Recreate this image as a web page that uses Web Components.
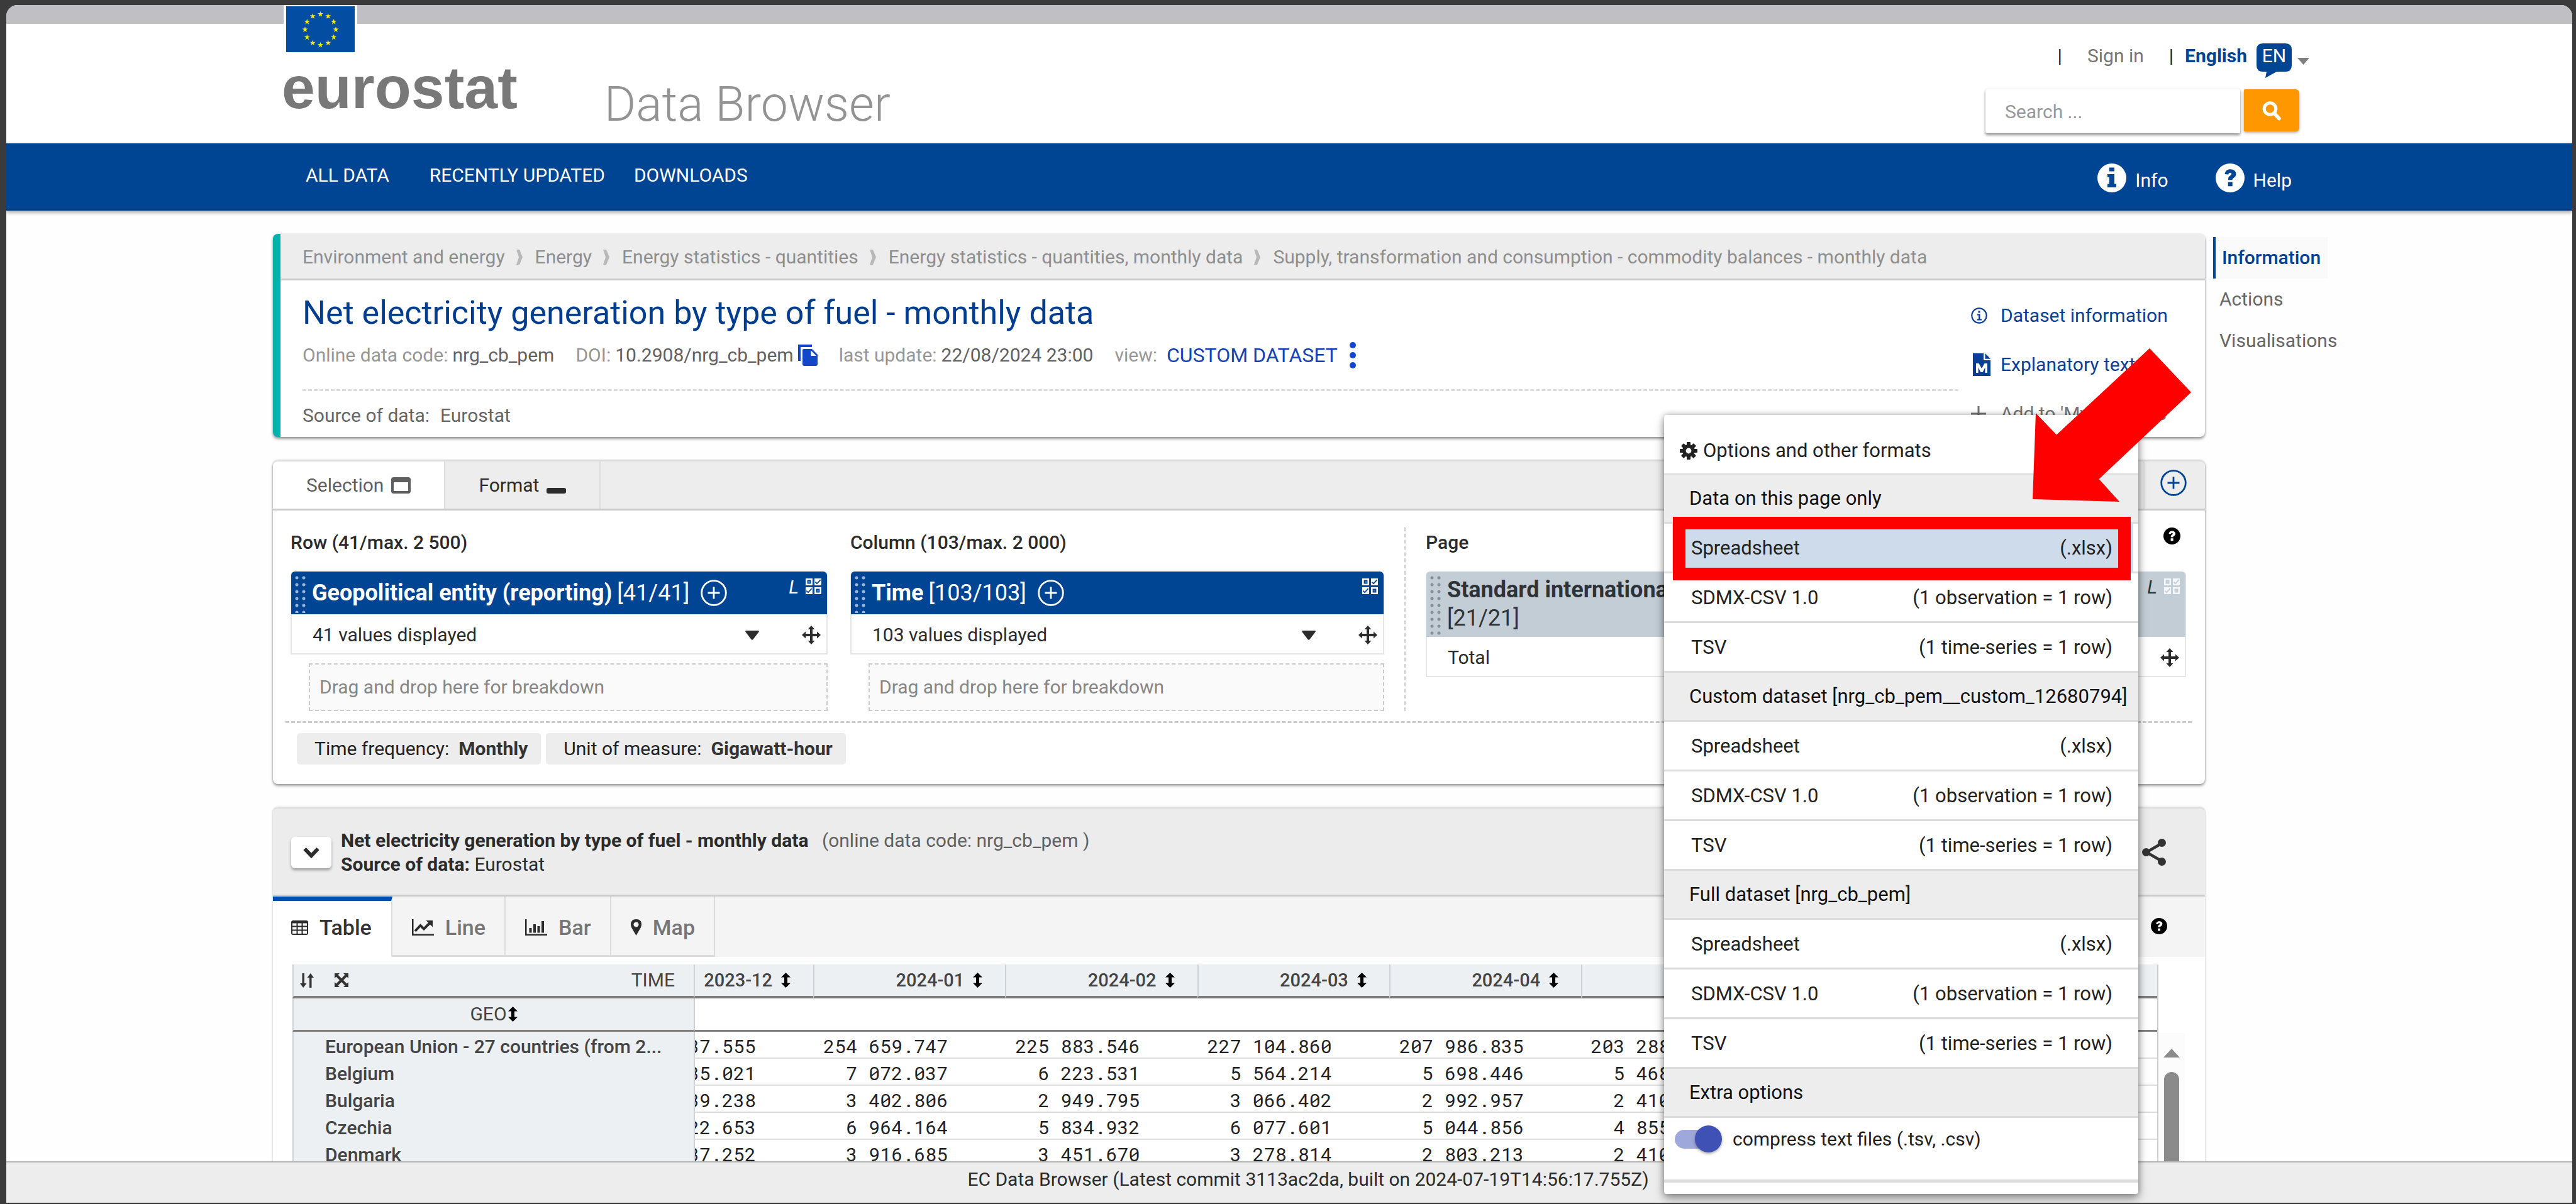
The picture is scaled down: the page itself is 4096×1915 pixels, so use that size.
<!DOCTYPE html>
<html lang="en">
<head>
<meta charset="utf-8">
<title>Data Browser - Eurostat</title>
<style>
html,body{height:100%}
body{margin:0;box-sizing:border-box;padding:8px 6px 2px 10px;background:#3b3b3b;font:400 30px/40px Roboto,"Liberation Sans",sans-serif;color:#333}
</style>
</head>
<body>
<db-app></db-app>
<script>
const BASE=`*{box-sizing:border-box}button,input,select{font:inherit;color:inherit;background:none;border:0;padding:0;margin:0;text-align:left;border-radius:0}a{color:inherit;text-decoration:none}p,h1,h2,h3,ul,ol{margin:0;padding:0;font:inherit;list-style:none}`;
function define(name,css,html){
  const t=document.createElement('template');
  customElements.define(name,class extends HTMLElement{
    constructor(){
      super();
      t.innerHTML=`<style>${BASE}${css}</style>${typeof html==='function'?html(this):html}`;
      this.attachShadow({mode:'open'}).append(t.content.cloneNode(true));
    }
  });
}

/* ---- icons ---- */
const star=(x,y)=>{let p='';for(let i=0;i<10;i++){const r=i%2?1.9:4.8,a=-Math.PI/2+i*Math.PI/5;p+=(x+r*Math.cos(a)).toFixed(2)+','+(y+r*Math.sin(a)).toFixed(2)+' '}return `<polygon points="${p}"/>`};
const ring=Array.from({length:12},(_,i)=>star(54.5+24.5*Math.sin(i*Math.PI/6),37-24.5*Math.cos(i*Math.PI/6))).join('');
const gear=()=>{let p='';for(let i=0;i<8;i++){p+=`<rect x="11" y="0" width="6" height="7" rx="1" transform="rotate(${i*45} 14 14)"/>`}return p+'<circle cx="14" cy="14" r="7.2" fill="none" stroke="currentColor" stroke-width="5.6"/>'};
const qmark=(bg,fg)=>`<circle cx="23" cy="23" r="23" fill="${bg}"/><path d="M14.5 17c.6-5.300 4.200-7.800 8.800-7.800 5.200 0 9.200 3 9.200 7.600 0 3.200-1.800 4.800-4 6.200-1.600 1-2 1.700-2 3.300h-6.600c0-3.600.6-5.200 3-6.900 1.600-1.100 2.300-1.600 2.300-2.700 0-1.200-1-1.900-2.200-1.900-1.500 0-2.300.9-2.800 2.700zM19.700 29.500h7v6.800h-7z" fill="${fg}"/>`;
const ICONS={
 flag:['0 0 109 73',`<rect width="109" height="73" fill="#034ea2"/><g fill="#f5ea14">${ring}</g>`],
 caret:['0 0 19 11','<path d="M0 0h19L9.500 11z"/>'],
 bubble:['0 0 56 55','<path d="M10 0h36q10 0 10 10v25q0 10-10 10H32L14 55l2-10h-6Q0 45 0 35V10Q0 0 10 0z"/>'],
 search:['0 0 30 30','<circle cx="12.500" cy="12" r="9.300" fill="none" stroke="currentColor" stroke-width="5"/><path d="M19 19l8 8.500" stroke="currentColor" stroke-width="5.500" stroke-linecap="round"/>'],
 info:['0 0 46 46','<circle cx="23" cy="23" r="23" fill="#fff"/><path d="M19 6.500h8v6h-8zM16 17h11v15.500h3V38H16v-5.500h3V22h-3z" fill="#004494"/>'],
 help:['0 0 46 46',qmark('#fff','#004494')],
 question:['0 0 46 46',qmark('#000','#fff')],
 sep:['0 0 12 24','<path d="M1 0h5l5 12-5 12H1l4-12z"/>'],
 copy:['0 0 31 34','<path d="M0 0h22v4H4v22H0z"/><path d="M9 7h13l9 9v15q0 3-3 3H10q-3 0-3-3V9q0-2 2-2z"/><path d="M20.500 9.500V18H29z" fill="#fff"/>'],
 dots:['0 0 10 42','<circle cx="5" cy="5" r="5"/><circle cx="5" cy="21" r="5"/><circle cx="5" cy="37" r="5"/>'],
 infoline:['0 0 26 26','<circle cx="13" cy="13" r="11.700" fill="none" stroke="currentColor" stroke-width="2.200"/><path d="M11.500 5.500h3v3h-3zM10 10.500h4.500v8H17v2H9.500v-2H12v-6h-2z"/>'],
 file:['0 0 28 36','<path d="M0 0h17v11h11v25H0z"/><path d="M19.500 0L28 8.800h-8.500z"/><path d="M5 31V16h4.500l4.500 8 4.500-8H23v15h-3.600v-8.500L15.500 30h-3L8.600 22.500V31z" fill="#fff"/>'],
 plus:['0 0 24 24','<path d="M10.500 0h3v24h-3zM0 10.500h24v3H0z"/>'],
 window:['0 0 31 26','<path fill-rule="evenodd" d="M4 0h23q4 0 4 4v18q0 4-4 4H4q-4 0-4-4V4q0-4 4-4zM4 8v14h23V8z"/>'],
 minim:['0 0 31 26','<rect y="17" width="31" height="9" rx="3"/>'],
 pluscircle:['0 0 42 42','<circle cx="21" cy="21" r="19.300" fill="none" stroke="currentColor" stroke-width="2.800"/><path d="M19.600 11.500h2.800v19h-2.800zM11.500 19.600h19v2.800h-19z"/>'],
 checks:['0 0 25 25','<g fill="none" stroke="currentColor" stroke-width="2.600"><path d="M1.300 1.300h8.400v8.400H1.300zM15.300 15.300h8.400v8.400h-8.400z"/></g><path d="M4 4h3v3H4zM18 18h3v3h-3z" opacity=".25"/><path fill-rule="evenodd" d="M14 0h11v11H14zM15.800 5l-1 1.300L18 9.400l6.300-6.600L23 1.600 18 6.900zM0 14h11v11H0zM1.800 19l-1 1.300L4 23.400l6.300-6.600L9 15.600 4 20.900z"/>'],
 move:['0 0 30 30','<path d="M15 0l5.500 6H17v7h7V9.500l6 5.500-6 5.500V17h-7v7h3.500L15 30l-5.500-6H13v-7H6v3.500L0 15l6-5.500V13h7V6H9.500z"/>'],
 drop:['0 0 22 15','<path d="M2 0h18q3 0 1.200 2.500L12.500 14q-1.500 1.600-3 0L.8 2.500Q-1 0 2 0z"/>'],
 chevron:['0 0 28 20','<path d="M3.500 4L14 15 24.500 4" fill="none" stroke="currentColor" stroke-width="6"/>'],
 share:['0 0 38 43','<path d="M32 7L7 21.500 32 36" fill="none" stroke="currentColor" stroke-width="4.500"/><circle cx="31.500" cy="6.500" r="6.500"/><circle cx="6.500" cy="21.500" r="6.500"/><circle cx="31.500" cy="36.500" r="6.500"/>'],
 table:['0 0 27 23','<path fill-rule="evenodd" d="M3 0h21q3 0 3 3v17q0 3-3 3H3q-3 0-3-3V3q0-3 3-3zM2 4.500v4h6.500v-4zm8.500 0v4h6v-4zm8 0v4H25v-4zM2 10.500v4h6.500v-4zm8.500 0v4h6v-4zm8 0v4H25v-4zM2 16.500V21h6.500v-4.500zm8.500 0V21h6v-4.500zm8 0V21H25v-4.500z"/>'],
 line:['0 0 35 26','<path d="M0 0h2.500v23.500H35V26H0z"/><path d="M5 19l8.500-9 5.500 5.500L29 5.500" fill="none" stroke="currentColor" stroke-width="4"/><path d="M22.500 2H33v10.500z"/>'],
 bar:['0 0 35 26','<path d="M0 0h2.500v23.500H35V26H0zM6.500 14h4v7.500h-4zM13 8h4v13.500h-4zM19.500 11h4v10.500h-4zM26 3h4v18.500h-4z"/>'],
 pin:['0 0 17 26','<path fill-rule="evenodd" d="M8.500 0Q17 0 17 8.500 17 11 15.500 14L8.500 26 1.500 14Q0 11 0 8.500 0 0 8.500 0zm0 4.500a4 4 0 1 0 .01 0z"/>'],
 sort:['0 0 15 24','<path d="M7.500 0L15 7.500h-5v9h5L7.500 24 0 16.500h5v-9H0z"/>'],
 swap:['0 0 22 23','<path d="M3.500 0h3.500v16h3.500L5.200 23 0 16h3.500zM15 23h3.500V7H22L16.800 0 11.500 7H15z"/>'],
 expand:['0 0 22 22','<path d="M0 0h8L5.500 2.500 11 8l5.500-5.500L14 0h8v8l-2.500-2.500L14 11l5.500 5.500L22 14v8h-8l2.500-2.500L11 14l-5.500 5.500L8 22H0v-8l2.500 2.500L8 11 2.500 5.500 0 8z"/>'],
 up:['0 0 26 14','<path d="M13 0l13 14H0z"/>'],
 gear:['0 0 28 28',gear()],
 arrow:['0 0 252 244','<path d="M0 240L5 103l33 34.500L186 0l66 70-146.500 138 32.500 36z"/>']
};
customElements.define('db-icon',class extends HTMLElement{
  connectedCallback(){
    if(this.shadowRoot)return;
    const [box,body]=ICONS[this.getAttribute('name')];
    const [, ,w,h]=box.split(' ');
    const size=this.getAttribute('size');
    const W=size||w,H=size?size*h/w:h;
    this.attachShadow({mode:'open'}).innerHTML=`<style>:host{display:block;flex:none}svg{display:block;overflow:visible}</style><svg width="${W}" height="${H}" viewBox="${box}" fill="currentColor" aria-hidden="true">${body}</svg>`;
  }
});

/* ---- site header ---- */
define('db-header',`
:host{display:flex;flex:none;height:220px;align-items:flex-start;padding:0 418px 0 438px;background:linear-gradient(#c0bfc4 30px,#fff 30px)}
.brand{color:#787878}
.flag{display:inline-block;padding:2px 4px 0;margin-left:3px;background:#fff;vertical-align:top}
.word{display:block;margin-top:9px;font:700 95px/95px "Liberation Sans",sans-serif}
h1{margin:113px 0 0 138px;font-weight:300;font-size:77px;line-height:90px;color:#939393}
.tools{margin:61px 0 0 auto;display:flex;flex-direction:column;align-items:flex-end}
.top{display:flex;align-items:flex-start;height:73px;color:#222}
.in{margin:0 40px}
.top .in{color:#757575}
.lang{display:flex;margin-left:18px;gap:15px;color:#004494;font-weight:700}
.en{display:grid;color:#004494}.en>*{grid-area:1/1}.en span{color:#fff;font-weight:400;text-align:center}
.car{margin:23px 0 0 9px;color:#808080}
form{display:flex;gap:6px;margin-right:16px}
input{width:405px;height:70px;padding:0 31px;background:#fff;box-shadow:0 3px 4px rgba(0,0,0,.4),0 0 3px rgba(0,0,0,.15);border-radius:2px;outline:0}
input::placeholder{color:#999;opacity:1}
form button{width:88px;height:67px;display:grid;place-items:center;background:#ff9800;color:#fff;border-radius:2px 6px 6px 2px;box-shadow:0 2px 4px rgba(0,0,0,.35)}
`,`<a class="brand" href="#"><span class="flag"><db-icon name="flag"></db-icon></span><span class="word">eurostat</span></a>
<h1>Data Browser</h1>
<div class="tools"><div class="top"><span>|</span><a class="in" href="#">Sign in</a><span>|</span><a class="lang" href="#"><span>English</span><span class="en"><db-icon name="bubble"></db-icon><span>EN</span></span></a><db-icon class="car" name="caret"></db-icon></div>
<form><input type="search" aria-label="Search" placeholder="Search ..."><button type="button" aria-label="Search"><db-icon name="search"></db-icon></button></form></div>`);

define('db-nav',`
:host{display:flex;flex:none;height:107px;align-items:center;padding:0 446px 0 476px;background:#004494;color:#fff;box-shadow:0 3px 6px rgba(0,0,0,.35);border-bottom:3px solid #003a80;position:relative}
nav{display:flex;gap:46px;padding-bottom:2px}
nav a:first-child{margin-right:18px}
.r{margin-left:auto;display:flex;gap:75px;padding-top:6px}
.r a{display:flex;align-items:center;gap:14px}.r span{padding-top:8px}
`,`<nav><a href="#">ALL DATA</a><a href="#">RECENTLY UPDATED</a><a href="#">DOWNLOADS</a></nav>
<div class="r"><a href="#"><db-icon name="info"></db-icon><span>Info</span></a><a href="#"><db-icon name="help"></db-icon><span>Help</span></a></div>`);

/* ---- dataset information card ---- */
define('db-info-card',`
:host{display:block;background:#fff;border-left:12px solid #00b1ac;border-radius:8px;box-shadow:0 3px 4px rgba(0,0,0,.4),0 0 3px rgba(0,0,0,.12);overflow:hidden}
ol{display:flex;align-items:center;height:74px;padding:2px 0 0 35px;background:#ededed;border-bottom:3px solid #ccc;color:#8e8e8e}
ol li{display:flex;align-items:center}
ol db-icon{margin:0 19px 0 17px;color:#b8b8b8}
.body{display:flex;gap:20px;padding-left:35px}
.l{flex:1;padding:22px 0 14px}
h2{font-size:52px;line-height:60px;color:#003d8f}
.meta{display:flex;gap:34px;margin:16px 0 33px;color:#969696}
.meta b{font-weight:400;color:#616161}
.meta p{display:flex;gap:7px;align-items:center}
.meta a{margin-left:8px;font-size:32px;color:#1543b5}
.meta button{color:#1147c8}
.meta .more{margin-left:12px}
.src{border-top:3px dashed #dcdcdc;padding-top:19px;display:flex;gap:17px;color:#666}
ul{width:372px;padding-top:36px;display:flex;flex-direction:column;gap:38px;color:#0b3f95}
ul a{display:flex;align-items:center}
ul .i{width:47px;height:40px;display:flex;align-items:center}
.i.s{padding-left:3px}
.add{color:#757575}
`,`<ol><li><a href="#">Environment and energy</a></li><li><db-icon name="sep"></db-icon><a href="#">Energy</a></li><li><db-icon name="sep"></db-icon><a href="#">Energy statistics - quantities</a></li><li><db-icon name="sep"></db-icon><a href="#">Energy statistics - quantities, monthly data</a></li><li><db-icon name="sep"></db-icon><a href="#">Supply, transformation and consumption - commodity balances - monthly data</a></li></ol>
<div class="body"><div class="l"><h2>Net electricity generation by type of fuel - monthly data</h2>
<div class="meta"><p>Online data code: <b>nrg_cb_pem</b></p><p>DOI: <b>10.2908/nrg_cb_pem</b><button type="button" aria-label="Copy DOI"><db-icon name="copy"></db-icon></button></p><p>last update: <b>22/08/2024 23:00</b></p><p>view: <a href="#">CUSTOM DATASET</a><button type="button" class="more" aria-label="More views"><db-icon name="dots"></db-icon></button></p></div>
<div class="src"><span>Source of data:</span><span>Eurostat</span></div></div>
<ul><li><a href="#"><span class="i"><db-icon name="infoline"></db-icon></span>Dataset information</a></li><li><a href="#"><span class="i s"><db-icon name="file"></db-icon></span>Explanatory texts</a></li><li><a class="add" href="#"><span class="i"><db-icon name="plus"></db-icon></span>Add to 'My datasets'</a></li></ul></div>`);

/* ---- dimension box ---- */
define('db-dimension',`
:host{display:block;--head:#004494;--ink:#fff;--dot:#9db6d6;--mark:#fff}
:host([page]){--head:#c3cdd5;--ink:#2e3338;--dot:#848f98;--mark:#f4f6f8}
.box{border:2px solid #e6e6e6;border-top:0;border-radius:6px 6px 0 0}
.h{display:flex;margin:0 -1px;align-items:stretch;min-height:68px;padding-right:9px;background:var(--head);color:var(--ink);border-radius:6px 6px 0 0;font-size:36px;line-height:45px}
.g{flex:none;width:22px;margin:7px 5px 2px 6px;background:radial-gradient(circle at 3px 3px,var(--dot) 2px,transparent 3px) 0 0/11px 11px}
.t{flex:1;display:flex;flex-wrap:wrap;align-items:center;align-content:center;column-gap:8px;padding:7px 0}
.t button{margin-left:10px}
h3{font-weight:700}
.m{display:flex;gap:11px;padding-top:11px;align-items:flex-start}
i{font-size:30px;line-height:27px}
.m db-icon{color:var(--mark)}
.b{display:flex;align-items:center;height:62px;padding:4px 9px 0 33px;color:#2b2b2b}
select{appearance:none;flex:1;outline:0;height:44px}
.b button{margin-left:68px}
.d{margin:14px 0 0 29px;height:76px;padding:0 15px;border:2px dashed #ccc;background:#fafafa;color:#868686;line-height:72px}
:host([page]) .d{display:none}
:host([page]) .n{flex-basis:100%}
`,el=>{const a=n=>el.getAttribute(n)||'';return `<div class="box"><div class="h"><span class="g"></span><div class="t"><h3>${a('label')}</h3><span class="n">${a('count')}</span>${el.hasAttribute('page')?'':'<button type="button" aria-label="Add"><db-icon name="pluscircle"></db-icon></button>'}</div><div class="m">${el.hasAttribute('labels')?'<i>L</i>':''}<db-icon name="checks"></db-icon></div></div>
<div class="b"><select aria-label="${a('label')}"><option>${a('value')}</option></select><db-icon name="drop"></db-icon><button type="button" aria-label="Move"><db-icon name="move"></db-icon></button></div></div>
<div class="d">Drag and drop here for breakdown</div>`});

define('db-chip',`:host{display:flex;align-items:center;gap:15px;height:50px;padding:0 21px 0 28px;background:#ededed;border-radius:5px;color:#222}::slotted(b){font-weight:700;color:#333}`,`<slot></slot><slot name="v"></slot>`);

/* ---- selection card ---- */
define('db-selection-card',`
:host{display:block;background:#fff;border-radius:8px;box-shadow:0 3px 4px rgba(0,0,0,.35),0 0 3px rgba(0,0,0,.25)}
.tabs{display:flex;height:80px;background:#ededed;border-top:2px solid #ddd;border-bottom:3px solid #ccc;border-radius:8px 8px 0 0}
.tabs button{display:flex;align-items:center;gap:12px;padding:0 53px;border-right:2px solid #ddd;color:#2b2b2b}
.tabs .on{background:#fff;color:#5f5f5f;border-radius:8px 0 0 0}
.tabs .add{margin-left:auto;width:98px;padding:0 0 8px 25px;border:0;border-left:2px solid #ddd;color:#004494}
.body{padding:27px 21px 31px 20px}
.grid{display:grid;grid-template-columns:854fr 853fr 1243fr;column-gap:32px;margin:0 9px 16px 8px}
.c2{padding-left:4px}.c3{padding-left:32px;border-left:2px dashed #ccc}
h3{display:flex;justify-content:space-between;align-items:flex-start;font-weight:500;line-height:48px;color:#2b2b2b;margin-bottom:22px;padding-right:9px}
.chips{display:flex;gap:8px;padding:16px 0 0 18px;border-top:3px dashed #ccc}
`,`<div class="tabs"><button type="button" class="on">Selection<db-icon name="window"></db-icon></button><button type="button">Format<db-icon name="minim"></db-icon></button><button type="button" class="add" aria-label="Add"><db-icon name="pluscircle"></db-icon></button></div>
<div class="body"><div class="grid">
<section><h3>Row (41/max. 2 500)</h3><db-dimension label="Geopolitical entity (reporting)" count="[41/41]" value="41 values displayed" labels></db-dimension></section>
<section class="c2"><h3>Column (103/max. 2 000)</h3><db-dimension label="Time" count="[103/103]" value="103 values displayed"></db-dimension></section>
<section class="c3"><h3>Page<db-icon name="question" size="27"></db-icon></h3><db-dimension page label="Standard international" count="[21/21]" value="Total" labels></db-dimension></section></div>
<div class="chips"><db-chip>Time frequency:<b slot="v">Monthly</b></db-chip><db-chip>Unit of measure:<b slot="v">Gigawatt-hour</b></db-chip></div></div>`);

/* ---- data table ---- */
const COLS=['2023-12','2024-01','2024-02','2024-03','2024-04','','',''];
const ROWS=[['European Union - 27 countries (from 2...','37.555','254 659.747','225 883.546','227 104.860','207 986.835','203 288'],
['Belgium','35.021','7 072.037','6 223.531','5 564.214','5 698.446','5 468'],
['Bulgaria','39.238','3 402.806','2 949.795','3 066.402','2 992.957','2 410'],
['Czechia','22.653','6 964.164','5 834.932','6 077.601','5 044.856','4 855'],
['Denmark','37.252','3 916.685','3 451.670','3 278.814','2 803.213','2 410']];
define('db-table',`
:host{display:flex;padding:12px 32px 0 31px}
table{flex:1;width:0;table-layout:fixed;border-collapse:separate;border-spacing:0;border-right:2px solid #ccc}
.c1{width:638px}.c2{width:190px}
th,td{padding:0;font-weight:500;color:#444}
thead th{font-size:29px;background:#ecf0f3;border-left:2px solid #cdd2d6}
thead tr:first-child th{height:54px;border-bottom:4px solid #7c7c7c}
thead tr+tr>*{height:53px;border-bottom:3px solid #7c7c7c;border-left:2px solid #cdd2d6}
.h{display:flex;align-items:center;justify-content:flex-end;gap:14px;padding-right:36px;height:50px}
.first{padding:0 30px 0 10px;gap:33px}.first span{margin-left:auto}
.geo{gap:2px;justify-content:center;padding:0}
.geo,.first{font-size:30px;font-weight:400}
.h db-icon{color:#000}.first db-icon{color:#333}
tbody th{height:43px;background:#ecf0f3;text-align:left;padding:4px 0 0 50px;border-left:2px solid #cdd2d6;white-space:nowrap;line-height:38px}
tbody td{height:43px;border-bottom:2px solid #ddd}
tbody td:nth-child(2){border-left:2px solid #cdd2d6}
.v{display:flex;justify-content:flex-end;overflow:hidden;margin-right:91px;padding-top:6px;height:41px;line-height:34px;font-family:"Roboto Mono","Noto Sans Mono","DejaVu Sans Mono",monospace;font-weight:400;color:#222;white-space:pre}
td:nth-child(7) .v{margin-right:164px}
.bar{flex:none;width:42px;margin-top:109px;background:#fcfcfc;display:flex;flex-direction:column;align-items:center;gap:23px;padding-top:25px;color:#8b8b8b}
.thumb{width:24px;flex:1;background:#8b8b8b;border-radius:12px 12px 0 0}
`,`<table><colgroup><col class="c1"><col class="c2"></colgroup>
<thead><tr><th scope="col"><div class="h first"><db-icon name="swap"></db-icon><db-icon name="expand"></db-icon><span>TIME</span></div></th>${COLS.map(c=>`<th scope="col"><div class="h">${c}<db-icon name="sort"></db-icon></div></th>`).join('')}</tr>
<tr><th scope="col"><div class="h geo">GEO<db-icon name="sort"></db-icon></div></th><td colspan="8"></td></tr></thead>
<tbody>${ROWS.map(r=>`<tr><th scope="row">${r[0]}</th>${r.slice(1).map(v=>`<td><div class="v">${v}</div></td>`).join('')}<td></td><td></td></tr>`).join('')}</tbody></table>
<div class="bar"><db-icon name="up"></db-icon><div class="thumb"></div></div>`);

define('db-data-card',`
:host{display:block;background:#fff;border-radius:8px 8px 0 0;box-shadow:0 0 3px rgba(0,0,0,.3)}
.head{display:flex;align-items:center;gap:15px;height:142px;padding:2px 62px 0 29px;background:#ececec;border-top:2px solid #ddd;border-bottom:3px solid #ccc;border-radius:8px 8px 0 0;line-height:38px;color:#2b2b2b}
.tog{width:64px;height:50px;display:grid;place-items:center;background:#fff;border-radius:6px;box-shadow:0 3px 4px rgba(0,0,0,.35)}
b{font-weight:700}
.head em{font-style:normal;color:#616161;margin-left:14px}
.share{margin-left:auto;color:#333}
.tabs{display:flex;height:96px;background:#f4f4f4;font-size:34px;font-weight:500;padding-right:60px}
.tabs button{display:flex;align-items:center;gap:18px;padding:4px 30px 0 31px;color:#767676;border-right:2px solid #ddd;border-bottom:3px solid #ddd}
.tabs button db-icon{color:#2b2b2b}
.tabs .on{background:#fff;color:#333;border-top:7px solid #004fae;border-bottom:0;padding:0 31px 5px 29px}
.q{margin:34px 0 0 auto}
`,`<div class="head"><button type="button" class="tog" aria-label="Collapse"><db-icon name="chevron"></db-icon></button><div><p><b>Net electricity generation by type of fuel - monthly data</b> <em>(online data code: nrg_cb_pem )</em></p><p><b>Source of data:</b> Eurostat</p></div><button type="button" class="share" aria-label="Share"><db-icon name="share"></db-icon></button></div>
<div class="tabs"><button type="button" class="on"><db-icon name="table"></db-icon>Table</button><button type="button"><db-icon name="line"></db-icon>Line</button><button type="button"><db-icon name="bar"></db-icon>Bar</button><button type="button"><db-icon name="pin"></db-icon>Map</button><db-icon class="q" name="question" size="26"></db-icon></div>
<db-table></db-table>`);

define('db-side',`
:host{display:block;flex:none;width:571px;color:#666}
a{display:block;line-height:66px;padding-left:10px}
.on{display:inline-block;margin-top:5px;color:#003f91;font-weight:500;border-left:4px solid #004494;background:#fafafa;padding-right:11px}
`,`<a class="on" href="#">Information</a><a href="#">Actions</a><a href="#">Visualisations</a>`);

/* ---- download menu ---- */
const FORMATS=[['Spreadsheet','(.xlsx)'],['SDMX-CSV 1.0','(1 observation = 1 row)'],['TSV','(1 time-series = 1 row)']];
const group=(t,on)=>`<h3>${t}</h3>${FORMATS.map((f,i)=>`<div class="row"><button type="button"${on&&!i?' class="on"':''}><span>${f[0]}</span><span>${f[1]}</span></button></div>`).join('')}`;
define('db-menu',`
:host{display:block;width:754px;background:#fff;border-radius:4px;box-shadow:0 8px 16px rgba(0,0,0,.35),0 0 10px rgba(0,0,0,.3);font-size:31px;color:#212121}
.t{display:flex;align-items:center;gap:9px;height:95px;padding:20px 25px 0;border-bottom:2px solid #dcdcdc}
h3{height:78px;line-height:76px;padding:0 0 0 40px;background:#ededed;border-bottom:3px solid #dcdcdc;color:#111;white-space:nowrap}
.row{height:79px;display:flex;padding:0 8px 0 13px;border-bottom:3px solid #dcdcdc}
button{flex:1;display:flex;justify-content:space-between;align-items:center;padding:2px 33px 0 30px}
.on{background:#cddbea}
label{display:flex;align-items:flex-start;gap:17px;height:103px;padding:12px 0 0 17px;font-size:30px;line-height:44px;border-bottom:5px solid #dcdcdc}
.end{height:18px}
input{appearance:none;display:grid;align-items:center;width:75px;height:43px}
input::before,input::after{content:"";grid-area:1/1}
input::before{width:66px;height:30px;border-radius:15px;background:#9fa8da}
input::after{width:43px;height:43px;border-radius:50%;justify-self:end;background:#3f51b5;box-shadow:0 2px 4px rgba(0,0,0,.35)}
`,`<div class="t"><db-icon name="gear"></db-icon>Options and other formats</div>
${group('Data on this page only',true)}${group('Custom dataset [nrg_cb_pem__custom_12680794]')}${group('Full dataset [nrg_cb_pem]')}
<h3>Extra options</h3><label><input type="checkbox" role="switch" checked>compress text files (.tsv, .csv)</label><div class="end"></div>`);

define('db-footer',`:host{display:block;flex:none;height:66px;padding:7px 0 0 60px;text-align:center;background:#ededed;border-top:2px solid #b5b5b5;color:#2b2b2b}`,`EC Data Browser (Latest commit 3113ac2da, built on 2024-07-19T14:56:17.755Z)`);

define('db-app',`
:host{position:relative;display:flex;flex-direction:column;height:100%;background:#fefefe;border-radius:18px 18px 0 0;overflow:hidden}
main{flex:1;min-height:0;overflow:hidden;display:flex;align-items:flex-start;gap:13px;padding:37px 0 0 424px}
.cards{flex:1;display:flex;flex-direction:column;gap:37px}
db-menu{position:absolute;top:652px;right:690px}
.frame{position:absolute;top:814px;right:702px;width:728px;height:101px;border:20px solid #f00;pointer-events:none}
.arrow{position:absolute;top:546px;right:606px;color:#f00}
`,`<db-header></db-header><db-nav></db-nav>
<main><div class="cards"><db-info-card></db-info-card><db-selection-card></db-selection-card><db-data-card></db-data-card></div><db-side></db-side></main>
<db-footer></db-footer><db-menu></db-menu><div class="frame"></div><db-icon class="arrow" name="arrow"></db-icon>`);
</script>
</body>
</html>
